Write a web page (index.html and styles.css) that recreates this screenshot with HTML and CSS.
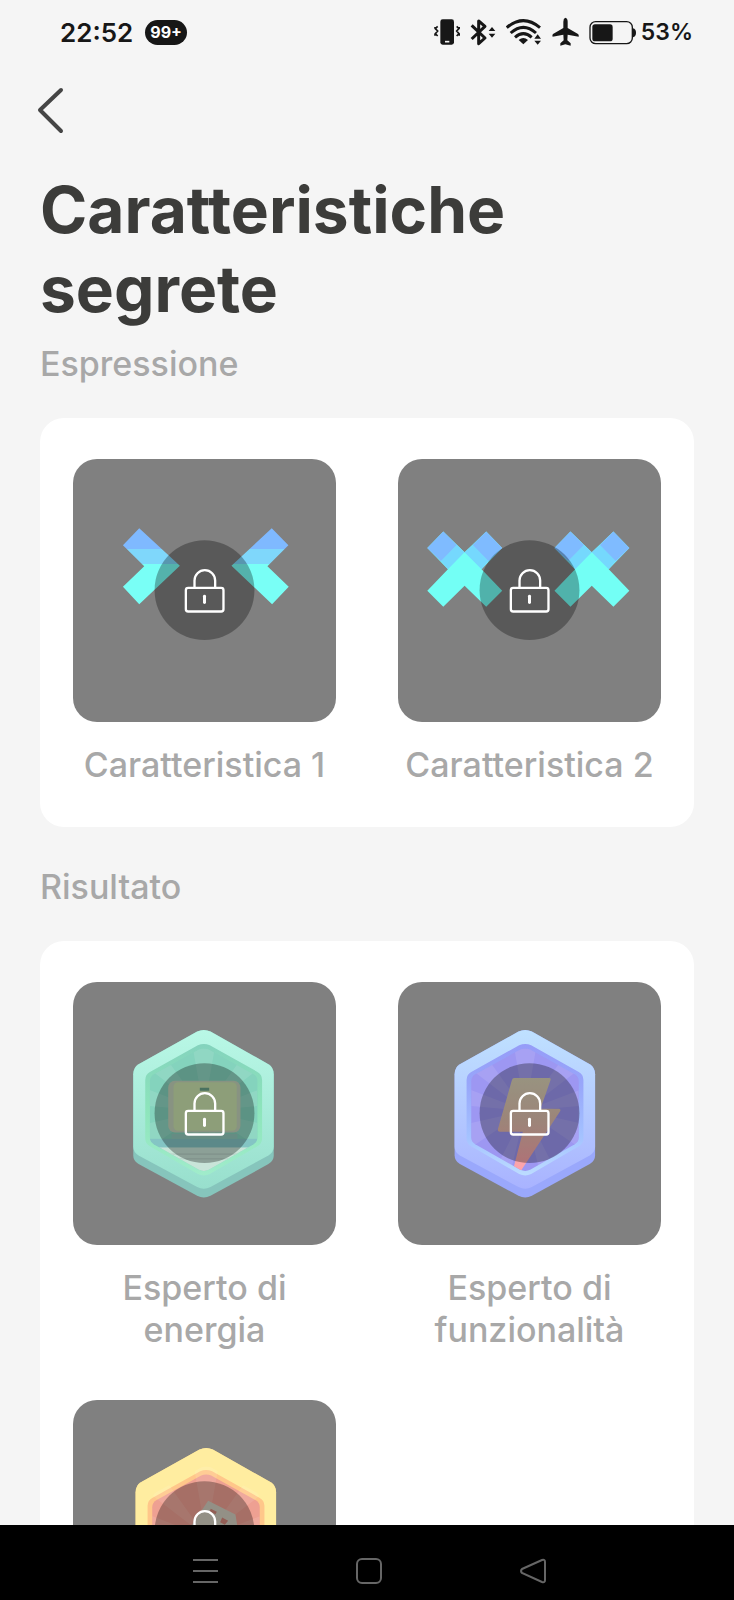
FILE: index.html
```html
<!DOCTYPE html>
<html lang="it">

<head>
  <meta charset="UTF-8" />
  <title>Caratteristiche segrete</title>
  <meta name="viewport" content="width=device-width, initial-scale=1.0" />
  <link rel="stylesheet" href="styles.css">
</head>

<body>
  <!-- Shared shapes -->
  <svg class="shapes" width="0" height="0" aria-hidden="true">
    <defs>
      <linearGradient id="bands" gradientUnits="userSpaceOnUse" x1="0" y1="208" x2="0" y2="436">
        <stop offset=".28" stop-color="#7fb9ff" />
        <stop offset=".28" stop-color="#7fd7fb" />
        <stop offset=".465" stop-color="#7fd7fb" />
        <stop offset=".465" stop-color="#79fff6" />
      </linearGradient>
      <linearGradient id="mint" x1="0" y1="0" x2="0" y2="1">
        <stop offset="0" stop-color="#b9f8e6" />
        <stop offset="1" stop-color="#98dfcd" />
      </linearGradient>
      <linearGradient id="mintRing" x1="0" y1="0" x2="0" y2="1">
        <stop offset="0" stop-color="#84d3bd" />
        <stop offset=".5" stop-color="#8de5bb" />
        <stop offset="1" stop-color="#a0eccb" />
      </linearGradient>
      <linearGradient id="blue" x1="0" y1="0" x2="0" y2="1">
        <stop offset="0" stop-color="#bfe1ff" />
        <stop offset="1" stop-color="#a9b3ff" />
      </linearGradient>
      <linearGradient id="blueRing" x1="0" y1="0" x2="0" y2="1">
        <stop offset="0" stop-color="#969cf8" />
        <stop offset=".3" stop-color="#98a6fa" />
        <stop offset=".7" stop-color="#a4c2ff" />
        <stop offset="1" stop-color="#bcdcff" />
      </linearGradient>
      <linearGradient id="boltFill" x1="0" y1="0" x2="0" y2="1">
        <stop offset="0" stop-color="#dad3b8" />
        <stop offset=".45" stop-color="#e0bfae" />
        <stop offset="1" stop-color="#ffa0aa" />
      </linearGradient>
      <path id="hexSide" d="M262 62Q282 52 302 62L476 160Q492 170 492 190V434Q492 450 476 460L302 555Q282 565 262 555L86 460Q70 450 70 434V190Q70 170 86 160Z" />
      <path id="hexFace" d="M262 62Q282 52 302 62L476 160Q492 170 492 190V408Q492 424 476 434L302 529Q282 539 262 529L86 434Q70 424 70 408V190Q70 170 86 160Z" />
      <path id="hexRing" d="M264 103Q282 95 300 103L443 183Q457 191 457 207V383Q457 398 443 406L300 490Q282 499 264 490L120 406Q106 398 106 383V207Q106 191 120 183Z" />
      <path id="hexHole" d="M267 116Q282 109 297 116L431 190Q443 197 443 211V380Q443 392 431 400L297 477Q282 484 267 477L132 400Q120 392 120 380V211Q120 197 132 190Z" />
      <clipPath id="holeClip"><use href="#hexHole" /></clipPath>
      <path id="rays" d="M282 300L240 60H324ZM282 300L60 130L110 60ZM282 300L454 60L504 130ZM282 300L60 215V280ZM282 300L504 215V280ZM282 300L60 350V450ZM282 300L504 350V450ZM282 300L170 520H230ZM282 300L334 520H394Z" />
      <g id="cross">
        <path fill="#73fff5" d="M136 218L200 280L265 218L313 267L251 331L313 396L265 444L200 381L136 444L88 396L150 331L88 267Z" />
        <path fill="#75d8fd" d="M200 280L150 331L129 307L177 258ZM200 280L251 331L272 307L224 258Z" />
        <path fill="#7fbbff" d="M136 218L177 258L129 307L88 267ZM265 218L224 258L272 307L313 267Z" />
      </g>
      <g id="lock">
        <circle cx="395" cy="394" r="150" fill="#000" fill-opacity=".3" />
        <g fill="none" stroke="#fff" stroke-width="7" stroke-linecap="round">
          <rect x="339" y="387" width="113" height="71" rx="7" />
          <path d="M365 387V365A31 31 0 0 1 427 365V387" />
          <path d="M395 412V431" stroke-width="9" />
        </g>
      </g>
    </defs>
  </svg>

  <header class="status-bar">
    <div class="status-left">
      <span class="clock">22:52</span>
      <span class="badge">99+</span>
    </div>
    <div class="status-icons">
      <!-- vibrate -->
      <svg width="26" height="30" viewBox="45 50 78 90">
        <rect x="64" y="57" width="41" height="76" rx="7" fill="#171717" />
        <path d="M78 124H91" stroke="#f5f5f5" stroke-width="5" />
        <path d="M56 78L49 85L56 92L49 100L56 107M48 80V84M48 100V106M113 78L120 85L113 92L120 100L113 107M121 80V84M121 100V106" fill="none" stroke="#171717" stroke-width="5" />
      </svg>
      <!-- bluetooth -->
      <svg width="26" height="30" viewBox="156 50 78 90">
        <path d="M161 75L201 113L182 130V62L201 78L161 116" fill="none" stroke="#171717" stroke-width="9" stroke-linejoin="round" />
        <path d="M212 92L222 80L232 92ZM212 100L222 112L232 100Z" fill="#171717" />
      </svg>
      <!-- wifi -->
      <svg width="36" height="30" viewBox="264 50 108 90">
        <g fill="none" stroke="#171717" stroke-width="9">
          <path d="M266 82Q316 40 366 82" />
          <path d="M278 98Q316 64 354 98" />
          <path d="M291 111Q316 89 341 111" />
        </g>
        <path d="M302 119Q316 107 330 119L316 132Z" fill="#171717" />
        <path d="M349 115L359 102L369 115ZM349 121L359 133L369 121Z" fill="#171717" />
      </svg>
      <!-- airplane -->
      <svg width="27" height="30" viewBox="397 50 81 90">
        <path d="M437 52Q444 54 444 64V83L475 101Q478 104 477 109L444 103L443 120L453 129V136L437 132L422 136V129L432 120L431 103L399 109Q397 104 400 101L431 83V64Q431 54 437 52Z" fill="#171717" />
      </svg>
      <div class="battery">
        <svg width="47" height="30" viewBox="508 50 141 90">
          <rect x="511" y="64" width="127" height="66" rx="17" fill="none" stroke="#171717" stroke-width="4" />
          <rect x="518" y="72" width="61" height="51" rx="8" fill="#171717" />
          <path d="M640 84Q649 86 649 97Q649 108 640 111Z" fill="#171717" />
        </svg>
        <span>53%</span>
      </div>
    </div>
  </header>

  <main>
    <button type="button" class="back" aria-label="Indietro">
      <svg width="32" height="48" viewBox="0 0 32 48">
        <path d="M25 4L4 24L25 45" fill="none" stroke="#454545" stroke-width="4" stroke-linecap="round" stroke-linejoin="round" />
      </svg>
    </button>

    <h1>Caratteristiche segrete</h1>

    <section>
      <h2>Espressione</h2>
      <div class="card">
        <figure>
          <svg class="tile" viewBox="0 0 790 790">
            <path fill="url(#bands)" d="M199 208L321 321L199 436L150 384L214 322L150 259Z" />
            <path fill="url(#bands)" d="M597 208L476 321L598 436L648 384L584 322L647 259Z" />
            <use href="#lock" />
          </svg>
          <figcaption>Caratteristica 1</figcaption>
        </figure>
        <figure>
          <svg class="tile" viewBox="0 0 790 790">
            <use href="#cross" />
            <use href="#cross" x="382" />
            <use href="#lock" />
          </svg>
          <figcaption>Caratteristica 2</figcaption>
        </figure>
      </div>
    </section>

    <section>
      <h2>Risultato</h2>
      <div class="card">
        <figure>
          <svg class="tile" viewBox="0 0 790 790">
            <g transform="translate(111 87)">
              <use href="#hexSide" fill="#86c5bc" />
              <use href="#hexFace" fill="url(#mint)" />
              <use href="#hexRing" fill="url(#mintRing)" />
              <use href="#hexHole" fill="#84d3bd" />
              <g clip-path="url(#holeClip)">
                <use href="#rays" fill="#fff" fill-opacity=".1" />
                <rect x="110" y="384" width="350" height="30" fill="#84c5c4" />
                <rect x="110" y="410" width="350" height="90" fill="#c9e5d9" />
                <path d="M110 430H460M110 444H460" stroke="#bcd6cc" stroke-width="5" />
                <path d="M150 452L282 510L414 452V500H150Z" fill="#dff8ee" />
              </g>
              <rect x="175" y="210" width="217" height="155" rx="20" fill="#c3d3bb" />
              <rect x="191" y="214" width="190" height="146" rx="14" fill="#cae2ae" />
              <path d="M270 235H298" stroke="#6ba389" stroke-width="9" />
              <rect x="185" y="369" width="198" height="15" fill="#93c9bc" />
            </g>
            <use href="#lock" />
          </svg>
          <figcaption>Esperto di energia</figcaption>
        </figure>
        <figure>
          <svg class="tile" viewBox="0 0 790 790">
            <g transform="translate(100 87)">
              <use href="#hexSide" fill="#9aa8fc" />
              <use href="#hexFace" fill="url(#blue)" />
              <use href="#hexRing" fill="url(#blueRing)" />
              <use href="#hexHole" fill="#9d97f2" />
              <g clip-path="url(#holeClip)">
                <use href="#rays" fill="#fff" fill-opacity=".1" />
                <path fill="url(#boltFill)" d="M249 201H353Q361 201 358 208L328 294H384Q390 295 387 301L268 482L248 468L275 363H206Q198 362 200 355L242 208Q244 201 249 201Z" />
              </g>
            </g>
            <use href="#lock" />
          </svg>
          <figcaption>Esperto di funzionalità</figcaption>
        </figure>
        <figure>
          <svg class="tile" viewBox="0 0 790 790">
            <g transform="translate(118 87)">
              <use href="#hexSide" fill="#f2cf83" />
              <use href="#hexFace" fill="#ffeda0" />
              <use href="#hexRing" y="24" fill="#ffc78a" />
              <use href="#hexHole" y="24" fill="#eea092" />
              <g clip-path="url(#holeClip)">
                <use href="#rays" y="24" fill="#fff" fill-opacity=".1" />
              </g>
              <path d="M288 216L370 257L377 300L340 380L190 320L238 290Z" fill="#d3cfc0" />
              <path d="M296 240L314 249L310 256L292 247ZM330 266L348 276L338 288L324 280Z" fill="#d3877a" />
            </g>
            <use href="#lock" />
          </svg>
        </figure>
      </div>
    </section>
  </main>

  <nav class="nav-bar">
    <button type="button" aria-label="Menu">
      <svg width="28" height="28" viewBox="0 0 28 28">
        <path d="M2 3H27M2 14H27M2 25H27" />
      </svg>
    </button>
    <button type="button" aria-label="Home">
      <svg width="28" height="28" viewBox="0 0 28 28">
        <rect x="2" y="2" width="24" height="24" rx="5" />
      </svg>
    </button>
    <button type="button" aria-label="Indietro">
      <svg width="28" height="28" viewBox="0 0 28 28">
        <path d="M3 12L23 3Q26 2 26 5V23Q26 26 23 25L3 16Q1 14 3 12Z" />
      </svg>
    </button>
  </nav>
</body>

</html>
```
FILE: styles.css
```css
* {
  box-sizing: border-box;
  margin: 0;
  padding: 0;
}

body {
  font-family: Inter, "Liberation Sans", sans-serif;
  background: #f5f5f5;
  color: #3c3c3a;
  display: flex;
  flex-direction: column;
  height: 100vh;
  overflow: hidden;
}

button {
  background: none;
  border: none;
  cursor: pointer;
}

svg {
  display: block;
}

.shapes {
  position: absolute;
}

/* Status bar */
.status-bar {
  flex: none;
  display: flex;
  align-items: center;
  justify-content: space-between;
  height: 64px;
  padding: 0 41px 0 60px;
  color: #171717;
}

.status-left,
.status-icons,
.battery {
  display: flex;
  align-items: center;
}

.status-left {
  gap: 12px;
}

.status-icons {
  gap: 10px;
}

.battery {
  gap: 5px;
  font-size: 23px;
  font-weight: 600;
}

.clock {
  font-size: 26px;
  font-weight: 600;
}

.badge {
  padding: 0 5px;
  border-radius: 13px;
  background: #171717;
  color: #fff;
  font-size: 16px;
  font-weight: 700;
  line-height: 25px;
}

/* Content */
main {
  flex: 1;
  min-height: 0;
  overflow: hidden;
  padding: 22px 40px 0;
}

.back {
  display: block;
  margin-left: -4px;
}

h1 {
  margin-top: 36px;
  font-size: 64px;
  font-weight: 700;
  line-height: 79px;
}

h2 {
  margin: 39px 0 33px;
  color: #a8a8a8;
  font-size: 34px;
  font-weight: 500;
  line-height: 42px;
}

h1 + section h2 {
  margin-top: 15px;
}

.card {
  display: grid;
  grid-template-columns: 1fr 1fr;
  gap: 49px 62px;
  padding: 41px 33px;
  border-radius: 24px;
  background: #fff;
}

.tile {
  width: 100%;
  border-radius: 24px;
  background: #808080;
}

figcaption {
  margin-top: 22px;
  color: #a8a8a8;
  font-size: 34px;
  font-weight: 500;
  line-height: 42px;
  text-align: center;
}

/* System navigation */
.nav-bar {
  flex: none;
  display: flex;
  align-items: center;
  justify-content: center;
  gap: 136px;
  height: 75px;
  padding: 16px 0 0 4px;
  background: #000;
}

.nav-bar svg {
  fill: none;
  stroke: #666;
  stroke-width: 2;
}
```
